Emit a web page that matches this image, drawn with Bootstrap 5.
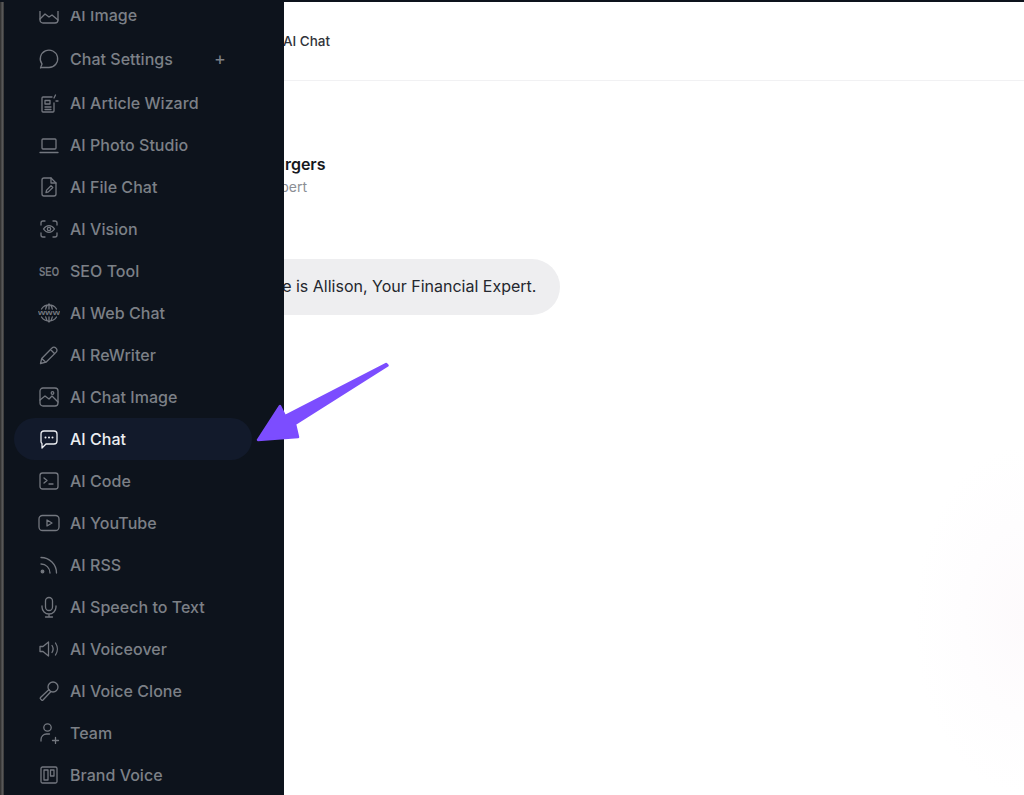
<!DOCTYPE html>
<html lang="en">
<head>
<meta charset="utf-8">
<title>AI Chat</title>
<link href="https://cdn.jsdelivr.net/npm/bootstrap@5.3.0/dist/css/bootstrap.min.css" rel="stylesheet">
<style>
html,body{height:100%;overflow:hidden}
body{font-family:Inter,"Liberation Sans",sans-serif;background:#fff;color:#1c1f26;}
.shell{height:795px;border-top:2px solid #0d131c;background:radial-gradient(ellipse 110px 175px at 1024px 618px,#fdfafc 0,#fefdfe 55%,#fff 100%) #fff}
.edge{width:4px;background:linear-gradient(90deg,#2a2a2a,#5a5a5a 60%,#333);flex:none}
.side{width:280px;flex:none;background:#0d131c;z-index:2;margin-top:-2px;height:795px;padding-top:11px}
.side-scroll{height:784px;overflow:hidden}
.side-list{margin:-17px 0 0 10px;width:238px;padding:0;list-style:none}
.side-item{height:42px;padding-left:24px;border-radius:21px;color:#7c8087;font-size:16px;font-weight:450;gap:10px;letter-spacing:.03px;white-space:nowrap}
.side-item svg{width:22px;height:22px;flex:none;fill:none;stroke:#73777f;stroke-width:1.3;stroke-linecap:round;stroke-linejoin:round}
.side-item svg text{fill:#73777f;stroke:none;font-family:"Liberation Sans",sans-serif;font-weight:700}
.spaced{margin:2px 0}
.side-item.on{background:#121a2b;color:#eceef1}
.side-item.on svg{stroke:#eceef1}
.plus{margin-left:31px;font-weight:400;font-size:18px;color:#7c8087;line-height:1}
.main{min-width:0;overflow:hidden}
.top-bar{height:79px;border-bottom:1px solid #f1f1f3;font-size:13.5px;font-weight:450;color:#30333a;margin-left:-1px}
.content{margin-left:-76px;padding-top:71px}
.who-name{font-size:16px;font-weight:600;color:#16181d;line-height:24px;white-space:nowrap}
.who-role{font-size:14px;color:#8b8e94;line-height:22px;white-space:nowrap}
.bubble{display:inline-block;margin-top:61px;margin-left:-58px;background:#eeeef0;border-radius:28px;height:56px;line-height:54px;padding:0 24px;font-size:16px;color:#24272e;white-space:nowrap}
.pointer{position:absolute;left:250px;top:355px;width:145px;height:90px;z-index:3;fill:#7c4dff;stroke:#7c4dff;stroke-width:2.500;stroke-linejoin:round}
</style>
</head>
<body>
<div class="shell d-flex position-relative">
  <div class="edge"></div>
  <nav class="side">
    <div class="side-scroll">
    <ul class="side-list">
      <li class="side-item d-flex align-items-center"><svg viewBox="0 0 22 22"><rect x="2" y="3" width="18" height="16" rx="3"/><path d="M2 15l5-5 4 3 3-2 6 5"/></svg>AI Image</li>
      <li class="side-item spaced d-flex align-items-center"><svg viewBox="0 0 22 22"><path d="M2.500 20l1.500-4A8.700 8.700 0 1 1 11 19.500H4z"/></svg>Chat Settings<span class="plus">+</span></li>
      <li class="side-item d-flex align-items-center"><svg viewBox="0 0 22 22"><path d="M14 5H5a1 1 0 0 0-1 1v13a1 1 0 0 0 1 1h10a1 1 0 0 0 1-1v-8"/><rect x="7" y="8.500" width="5" height="3.500"/><path d="M7 15h6M7 17.500h6M17.500 3l-1.500 3M20 9h-2"/></svg>AI Article Wizard</li>
      <li class="side-item d-flex align-items-center"><svg viewBox="0 0 22 22"><rect x="4" y="5" width="14" height="10" rx="1"/><path d="M2 18.500h18"/></svg>AI Photo Studio</li>
      <li class="side-item d-flex align-items-center"><svg viewBox="0 0 22 22"><path d="M13 2H6a2 2 0 0 0-2 2v14a2 2 0 0 0 2 2h10a2 2 0 0 0 2-2V7z"/><path d="M13 2v5h5M8 16.500l.6-2.400 4.400-4.400 1.800 1.800-4.400 4.400z"/></svg>AI File Chat</li>
      <li class="side-item d-flex align-items-center"><svg viewBox="0 0 22 22"><path d="M3 7V5a2 2 0 0 1 2-2h2M15 3h2a2 2 0 0 1 2 2v2M19 15v2a2 2 0 0 1-2 2h-2M7 19H5a2 2 0 0 1-2-2v-2"/><path d="M5.500 11c3-4.500 8-4.500 11 0-3 4.500-8 4.500-11 0z"/><circle cx="11" cy="11" r="1.700"/></svg>AI Vision</li>
      <li class="side-item d-flex align-items-center"><svg viewBox="0 0 22 22"><text x="1" y="15.500" font-size="12.500" textLength="20" lengthAdjust="spacingAndGlyphs">SEO</text></svg>SEO Tool</li>
      <li class="side-item d-flex align-items-center"><svg viewBox="0 0 22 22"><path d="M3.500 7a9 9 0 0 1 15 0M3.500 15a9 9 0 0 0 15 0M11 2c-2 1-3 3-3.300 5M11 2c2 1 3 3 3.300 5M11 20c-2-1-3-3-3.300-5M11 20c2-1 3-3 3.300-5M11 2v5M11 15v5"/><text x="0" y="13.200" font-size="7" textLength="22" lengthAdjust="spacingAndGlyphs">www</text></svg>AI Web Chat</li>
      <li class="side-item d-flex align-items-center"><svg viewBox="0 0 22 22"><path d="M2.500 19.500l1.200-5L14 4a2.600 2.600 0 0 1 3.800 0l.4.400a2.600 2.600 0 0 1 0 3.700L8 18.200zM12.500 5.500l4.200 4.200M3.700 14.500l4.100 3.800"/></svg>AI ReWriter</li>
      <li class="side-item d-flex align-items-center"><svg viewBox="0 0 22 22"><rect x="2" y="2" width="18" height="18" rx="3"/><path d="M2 14l5-4 4 3 3-3 6 6"/><circle cx="14.500" cy="7" r="1.300"/></svg>AI Chat Image</li>
      <li class="side-item on d-flex align-items-center"><svg viewBox="0 0 22 22"><path d="M4 20v-4.500A2.500 2.500 0 0 1 3 13.500V6a3 3 0 0 1 3-3h10a3 3 0 0 1 3 3v7a3 3 0 0 1-3 3H8z"/><path d="M7.500 9.500h.01M11 9.500h.01M14.500 9.500h.01" stroke-width="2"/></svg>AI Chat</li>
      <li class="side-item d-flex align-items-center"><svg viewBox="0 0 22 22"><rect x="2" y="3" width="18" height="16" rx="2.500"/><path d="M6 8l3 2.500L6 13M11 14h4"/></svg>AI Code</li>
      <li class="side-item d-flex align-items-center"><svg viewBox="0 0 22 22"><rect x="1" y="3.500" width="20" height="15" rx="3.500"/><path d="M9 8l5 3-5 3z"/></svg>AI YouTube</li>
      <li class="side-item d-flex align-items-center"><svg viewBox="0 0 22 22"><path d="M3 10a9 9 0 0 1 9 9M3 3.500A15.500 15.500 0 0 1 18.500 19"/><circle cx="4.500" cy="17.500" r="1.300" fill="#73777f"/></svg>AI RSS</li>
      <li class="side-item d-flex align-items-center"><svg viewBox="0 0 22 22"><rect x="7.500" y="1.500" width="7" height="13" rx="3.500"/><path d="M4 10v1a7 7 0 0 0 14 0v-1M11 18v3M7.500 21h7"/></svg>AI Speech to Text</li>
      <li class="side-item d-flex align-items-center"><svg viewBox="0 0 22 22"><path d="M2 8.500h3L10.500 4v14L5 13.500H2zM14 7.500c1.300 2 1.300 5 0 7M17.500 5c2.400 3.500 2.400 8.500 0 12"/></svg>AI Voiceover</li>
      <li class="side-item d-flex align-items-center"><svg viewBox="0 0 22 22"><circle cx="15" cy="7" r="5"/><path d="M11 9.500l-8.500 8a1 1 0 0 0 0 1.400l1.100 1.100a1 1 0 0 0 1.400 0l8-8.500"/></svg>AI Voice Clone</li>
      <li class="side-item d-flex align-items-center"><svg viewBox="0 0 22 22"><circle cx="9.500" cy="5.500" r="3.700"/><path d="M3 19v-1.500A5.500 5.500 0 0 1 8.500 12h3M14.500 18.500h6M17.500 15.500v6"/></svg>Team</li>
      <li class="side-item d-flex align-items-center"><svg viewBox="0 0 22 22"><rect x="3" y="3" width="16" height="16" rx="1.500"/><rect x="6" y="6" width="4" height="10"/><rect x="12.500" y="6" width="3.500" height="6"/></svg>Brand Voice</li>
    </ul>
    </div>
  </nav>
  <main class="main flex-grow-1">
    <div class="top-bar d-flex align-items-center">AI Chat</div>
    <div class="content">
      <div class="who-name">Allison Burgers</div>
      <div class="who-role">Finance Expert</div>
      <div class="bubble">Hello! My name is Allison, Your Financial Expert.</div>
    </div>
  </main>
  <svg class="pointer" viewBox="250 355 145 90" aria-hidden="true"><path d="M386 362 L387.500 363.500 L295 422 L298 435 L258 438 L280 404 L285 414 Z"/></svg>
</div>
<script src="https://cdn.jsdelivr.net/npm/bootstrap@5.3.0/dist/js/bootstrap.bundle.min.js"></script>
</body>
</html>
